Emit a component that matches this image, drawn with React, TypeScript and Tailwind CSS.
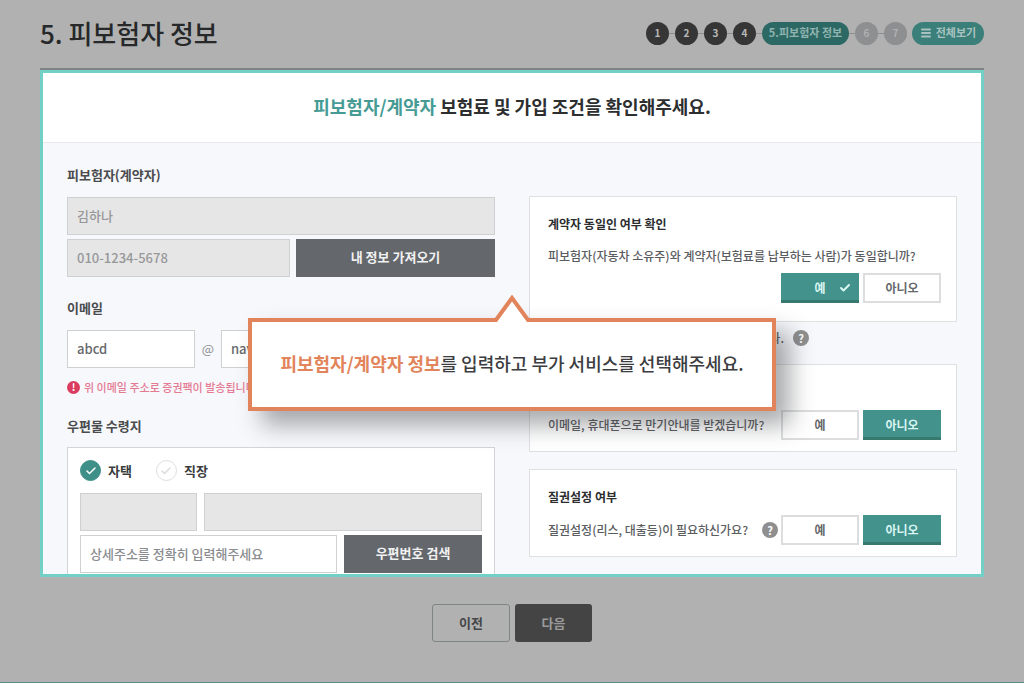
import React, { useState } from "react";
import { Check, Menu } from "lucide-react";
import clsx from "clsx";

const FONT = "font-['Noto_Sans_CJK_KR','Noto_Sans',sans-serif]";

const fieldClass =
  "h-[38px] min-w-0 border border-[#cfd0d1] px-[9px] pb-[2px] text-[13px] font-medium outline-none";

interface Step {
  label: string;
  state: "done" | "current" | "todo";
}

const steps: Step[] = [
  { label: "1", state: "done" },
  { label: "2", state: "done" },
  { label: "3", state: "done" },
  { label: "4", state: "done" },
  { label: "5.피보험자 정보", state: "current" },
  { label: "6", state: "todo" },
  { label: "7", state: "todo" },
];

const Stepper: React.FC = () => (
  <nav aria-label="진행 단계" className="flex items-center">
    <ol className="flex items-center">
      {steps.map((step, index) => (
        <li key={step.label} className="flex items-center">
          {index > 0 && <span className="h-px w-[6px] bg-[#8e8e8e]" />}
          <span
            className={clsx(
              "flex h-[23px] items-center justify-center rounded-full pb-px font-bold whitespace-nowrap",
              step.state === "done" && "w-[23px] bg-[#363636] text-[10px] text-[#b9b9b9]",
              step.state === "current" && "w-[87px] bg-[#2d6964] text-[11px] text-[#8fb3b0]",
              step.state === "todo" && "w-[23px] bg-[#8d8f90] text-[10px] text-[#b0b1b2]"
            )}
          >
            {step.label}
          </span>
        </li>
      ))}
    </ol>
    <button
      type="button"
      className="ml-[5px] flex h-[23px] w-[72px] items-center justify-center gap-1 rounded-full bg-[#3a7f79] pb-px text-[11px] font-bold whitespace-nowrap text-[#a9c2c0]"
    >
      <Menu className="h-3 w-3" strokeWidth={4} />
      전체보기
    </button>
  </nav>
);

interface FieldLabelProps {
  htmlFor?: string;
  children: React.ReactNode;
}

const FieldLabel: React.FC<FieldLabelProps> = ({ htmlFor, children }) => (
  <label
    htmlFor={htmlFor}
    className="mb-3 block text-[13px] leading-5 font-bold text-[#4a4c4e]"
  >
    {children}
  </label>
);

const DarkButton: React.FC<{ className: string; children: React.ReactNode }> = ({
  className,
  children,
}) => (
  <button
    type="button"
    className={clsx(
      "h-[38px] bg-[#64676c] pb-[2px] text-[13px] font-bold text-[#f1f1f1]",
      className
    )}
  >
    {children}
  </button>
);

interface PlaceRadioProps {
  label: string;
  checked: boolean;
  onChange: () => void;
}

const PlaceRadio: React.FC<PlaceRadioProps> = ({ label, checked, onChange }) => (
  <label className="flex items-center gap-[7px] text-[13px] leading-5 font-bold text-[#3a3c3e]">
    <input
      type="radio"
      name="place"
      className="sr-only"
      checked={checked}
      onChange={onChange}
    />
    <span
      className={clsx(
        "flex h-[21px] w-[21px] items-center justify-center rounded-full border",
        checked
          ? "border-[#3e8f88] bg-[#3e8f88] text-white"
          : "border-[#dedede] bg-white text-[#dcdcdc]"
      )}
    >
      <Check className="h-3 w-3" strokeWidth={3} />
    </span>
    {label}
  </label>
);

const HelpIcon: React.FC = () => (
  <button
    type="button"
    aria-label="도움말"
    className="flex h-4 w-4 shrink-0 items-center justify-center rounded-full bg-[#8f8f8f] text-[11px] leading-4 font-bold text-white"
  >
    ?
  </button>
);

interface YesNoProps {
  value: "yes" | "no";
  showCheck?: boolean;
}

const YesNo: React.FC<YesNoProps> = ({ value, showCheck }) => {
  const [answer, setAnswer] = useState(value);
  const base = "relative h-[30px] w-[78px] text-[12px] font-bold";
  const on = "border-b-[3px] border-[#38796f] bg-[#43928c] pt-[3px] text-[#d9f6f3]";
  const off = "border-2 border-[#dcdddf] bg-white text-[#66686b]";

  return (
    <div className="flex shrink-0 gap-1">
      <button
        type="button"
        aria-pressed={answer === "yes"}
        onClick={() => setAnswer("yes")}
        className={clsx(base, answer === "yes" ? on : off)}
      >
        예
        {showCheck && answer === "yes" && (
          <Check className="absolute top-[9px] right-2 h-3 w-3" strokeWidth={4} />
        )}
      </button>
      <button
        type="button"
        aria-pressed={answer === "no"}
        onClick={() => setAnswer("no")}
        className={clsx(base, answer === "no" ? on : off)}
      >
        아니오
      </button>
    </div>
  );
};

const cardClass = "border border-[#dfe0e1] bg-white pt-[17px] pr-[15px] pl-[18px]";
const cardTitleClass = "text-[12px] leading-5 font-bold text-[#2b2d2f]";
const cardTextClass = "text-[12px] leading-5 font-medium whitespace-nowrap text-[#5a5c5f]";

const ApplicantForm: React.FC = () => {
  const [place, setPlace] = useState("home");

  return (
    <div className="flex min-w-0 flex-col gap-[21px] pt-[22px]">
      <div>
        <FieldLabel htmlFor="name">피보험자(계약자)</FieldLabel>
        <div className="flex flex-col gap-1">
          <input
            id="name"
            readOnly
            defaultValue="김하나"
            className={clsx(fieldClass, "w-full bg-[#e6e6e6] text-[#97989a]")}
          />
          <div className="flex gap-[6px]">
            <input
              aria-label="휴대폰 번호"
              readOnly
              defaultValue="010-1234-5678"
              className={clsx(fieldClass, "flex-1 bg-[#e6e6e6] text-[#97989a]")}
            />
            <DarkButton className="w-[199px]">내 정보 가져오기</DarkButton>
          </div>
        </div>
      </div>

      <div>
        <FieldLabel htmlFor="email">이메일</FieldLabel>
        <div className="flex items-center">
          <input
            id="email"
            defaultValue="abcd"
            className={clsx(fieldClass, "w-32 bg-white text-[#66686b]")}
          />
          <span className="w-[26px] text-center text-[13px] text-[#8e8f91]">@</span>
          <input
            aria-label="이메일 도메인"
            defaultValue="naver.com"
            className={clsx(fieldClass, "flex-1 bg-white text-[#66686b]")}
          />
        </div>
        <p className="mt-[11px] flex items-center gap-1 text-[11px] leading-4 font-medium whitespace-nowrap text-[#e57a93]">
          <span className="flex h-[13px] w-[13px] items-center justify-center rounded-full bg-[#da3b5e] text-[10px] font-bold text-white">
            !
          </span>
          위 이메일 주소로 증권팩이 발송됩니다.
        </p>
      </div>

      <div>
        <h3 className="mb-[11px] text-[13px] leading-5 font-bold text-[#4a4c4e]">우편물 수령지</h3>
        <div className="border border-b-0 border-[#d3d4d6] bg-white px-3 pt-3 pb-px">
          <div className="mb-3 flex gap-6">
            <PlaceRadio
              label="자택"
              checked={place === "home"}
              onChange={() => setPlace("home")}
            />
            <PlaceRadio
              label="직장"
              checked={place === "office"}
              onChange={() => setPlace("office")}
            />
          </div>
          <div className="mb-1 flex gap-[7px]">
            <input
              aria-label="우편번호"
              readOnly
              className={clsx(fieldClass, "w-[117px] bg-[#e6e6e6]")}
            />
            <input
              aria-label="주소"
              readOnly
              className={clsx(fieldClass, "flex-1 bg-[#e6e6e6]")}
            />
          </div>
          <div className="flex gap-[7px]">
            <input
              aria-label="상세주소"
              placeholder="상세주소를 정확히 입력해주세요"
              className={clsx(fieldClass, "flex-1 bg-white placeholder:text-[#8a8c8f]")}
            />
            <DarkButton className="w-[138px]">우편번호 검색</DarkButton>
          </div>
        </div>
      </div>
    </div>
  );
};

const ServiceOptions: React.FC = () => (
  <div className="min-w-0 pt-[53px]">
    <section className={clsx(cardClass, "pb-[18px]")}>
      <h3 className={cardTitleClass}>계약자 동일인 여부 확인</h3>
      <p className={clsx(cardTextClass, "mt-3 mb-[7px]")}>
        피보험자(자동차 소유주)와 계약자(보험료를 납부하는 사람)가 동일합니까?
      </p>
      <div className="flex justify-end">
        <YesNo value="yes" showCheck />
      </div>
    </section>

    <div className="mb-[10px] flex h-8 items-center justify-end gap-[9px] pr-[148px]">
      <p className={cardTextClass}>동일하지 않을 경우 가입이 제한됩니다.</p>
      <HelpIcon />
    </div>

    <section className={clsx(cardClass, "mb-[17px] pb-[11px]")}>
      <h3 className={cardTitleClass}>만기안내 여부</h3>
      <div className="mt-2 flex items-center justify-between">
        <p className={cardTextClass}>이메일, 휴대폰으로 만기안내를 받겠습니까?</p>
        <YesNo value="no" />
      </div>
    </section>

    <section className={clsx(cardClass, "pb-[11px]")}>
      <h3 className={cardTitleClass}>질권설정 여부</h3>
      <div className="mt-2 flex items-center gap-[3px]">
        <p className={clsx(cardTextClass, "flex-1")}>질권설정(리스, 대출등)이 필요하신가요?</p>
        <HelpIcon />
        <YesNo value="no" />
      </div>
    </section>
  </div>
);

const GuideTooltip: React.FC = () => (
  <div
    role="tooltip"
    className="absolute top-[175px] left-1/2 flex h-[93px] w-[528px] -translate-x-1/2 items-center justify-center border-4 border-[#e2845b] bg-white pb-1 shadow-[14px_14px_22px_rgba(50,52,58,0.42)]"
  >
    {/* pointer, overlaps the top border */}
    <svg
      className="absolute -top-[27px] left-1/2 h-[27px] w-9 -translate-x-1/2"
      viewBox="0 0 36 27"
      fill="none"
    >
      <path d="M2 26 L18 4 L34 26 V27 H2 Z" fill="#fff" />
      <path d="M0 25 H2 L18 3 L34 25 H36" stroke="#e2845b" strokeWidth="4" />
    </svg>
    <p className="text-[18px] leading-6 font-medium whitespace-nowrap text-[#3c3d40]">
      <strong className="font-bold text-[#e2845b]">피보험자/계약자 정보</strong>를 입력하고 부가
      서비스를 선택해주세요.
    </p>
  </div>
);

const App: React.FC = () => {
  return (
    <div
      className={clsx(
        FONT,
        "flex min-h-screen flex-col border-b border-[#5f8985] bg-[#b1b1b1] px-10"
      )}
    >
      <header className="flex h-[68px] items-center justify-between pb-[2px]">
        <h1 className="text-[26px] leading-9 font-medium text-[#262829]">5. 피보험자 정보</h1>
        <Stepper />
      </header>

      <main className="border-t-2 border-[#7f8383]">
        <div className="border-[3px] border-[#72d0c7] bg-[#f7f8fc]">
          <h2 className="flex h-[70px] items-center justify-center border-b border-[#e9eaec] bg-white pb-[2px] text-[18px] font-bold text-[#2c2e30]">
            <span>
              <span className="text-[#469b95]">피보험자/계약자</span> 보험료 및 가입 조건을
              확인해주세요.
            </span>
          </h2>
          <div className="relative grid grid-cols-2 gap-x-[34px] px-6">
            <ApplicantForm />
            <ServiceOptions />
            <GuideTooltip />
          </div>
        </div>
      </main>

      <div className="flex justify-center gap-[5px] py-[27px]">
        <button
          type="button"
          className="h-[38px] w-[78px] rounded-[3px] border border-[#7f8586] text-[13px] font-bold text-[#454749]"
        >
          이전
        </button>
        <button
          type="button"
          className="h-[38px] w-[77px] rounded-[3px] bg-[#444444] text-[13px] font-bold text-[#9a9a9a]"
        >
          다음
        </button>
      </div>
    </div>
  );
};

export default App;
